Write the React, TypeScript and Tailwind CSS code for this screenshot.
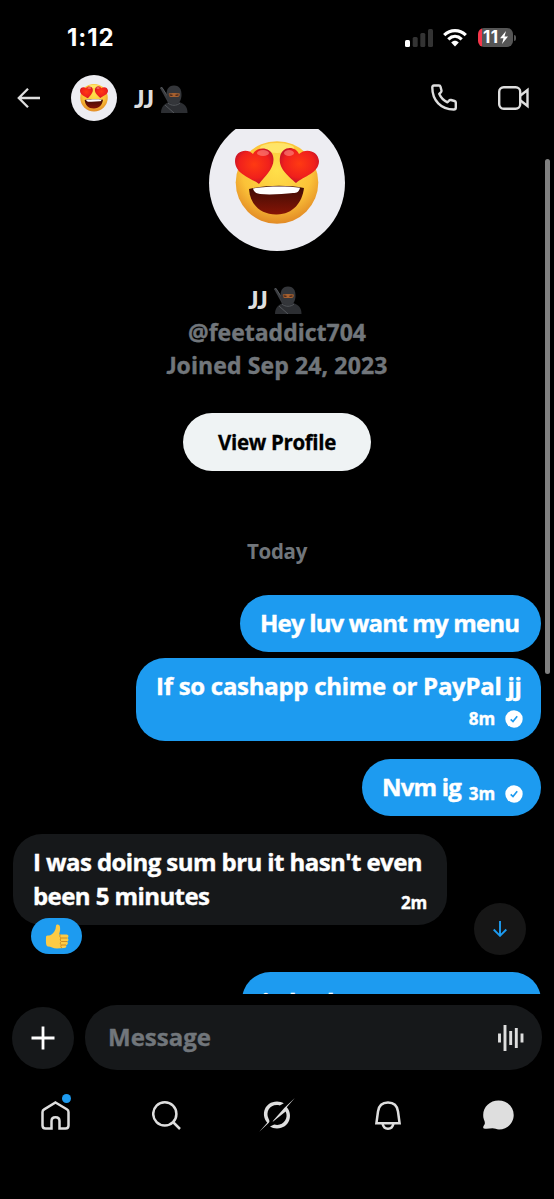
import React from 'react';
import { clsx } from 'clsx';

interface IconProps {
  className?: string;
}

const HeartEyes: React.FC<IconProps> = ({ className }) => (
  <svg viewBox="0 0 84 84" className={className}>
    <defs>
      <radialGradient id="face" cx="50%" cy="35%" r="65%">
        <stop offset="0%" stopColor="#ffe04a" />
        <stop offset="65%" stopColor="#fbc238" />
        <stop offset="100%" stopColor="#e28a25" />
      </radialGradient>
      <radialGradient id="heart" cx="50%" cy="45%" r="60%">
        <stop offset="0%" stopColor="#ff3a12" />
        <stop offset="65%" stopColor="#f0201c" />
        <stop offset="100%" stopColor="#b80f2c" />
      </radialGradient>
      <linearGradient id="mouth" x1="0" y1="0" x2="0" y2="1">
        <stop offset="0%" stopColor="#3c0c06" />
        <stop offset="100%" stopColor="#861405" />
      </linearGradient>
    </defs>
    <circle cx="42" cy="41.5" r="41.3" fill="url(#face)" />
    <ellipse cx="42" cy="7" rx="17" ry="5" fill="#fff07a" opacity="0.7" />
    <path d="M14 48C30 44 54 44 69 47C67 62 58 73 42 73.500C26 74 15 64 14 48Z" fill="url(#mouth)" />
    <path d="M18 47.500C32 45 53 45 65 46.800C64 51 62 52 58 52C48 53 35 54 25 53C21 52.500 19 51 18 47.500Z" fill="#fff" />
    <path
      d="M24 43C16 37 0 33 0 20C0 9 13 7 18 13C21 6 35 5 38 15C41 26 30 35 24 43Z"
      fill="url(#heart)"
    />
    <path
      d="M61 42C53 35 43 27 45 16C47 4 61 5 64 13C70 7 83 9 84 20C84 32 69 35 61 42Z"
      fill="url(#heart)"
    />
    <ellipse cx="28" cy="12" rx="6" ry="3" fill="#ff8e86" opacity="0.6" />
    <ellipse cx="54" cy="12" rx="5" ry="3" fill="#ff8e86" opacity="0.6" />
  </svg>
);

const Ninja: React.FC<IconProps> = ({ className }) => (
  <svg viewBox="0 0 28 28" className={className}>
    <path d="M0 3L2 2L14 21L11 23Z" fill="#3a3c40" />
    <path d="M0.500 3L2 2.500L8 12" fill="none" stroke="#55585c" strokeWidth="1" />
    <path d="M1 28C1 22 4 19 9 17L19 17C25 19 27.500 22 27.500 28Z" fill="#2c2e32" />
    <path d="M14 0.500C8 0.500 6.500 5 6.500 10C6.500 15 9 19.500 14 19.500C19 19.500 21.500 15 21.500 10C21.500 5 20 0.500 14 0.500Z" fill="#34363a" />
    <path d="M8.800 8.500C11 7.800 17 7.800 19.800 8.500C19.800 12 18.500 12.200 14 12C10 12.200 8.800 12 8.800 8.500Z" fill="#a5602f" />
    <path d="M9.500 9.800L12.500 10.300M15.500 10.300L18.500 9.800" stroke="#41231a" strokeWidth="1.300" />
    <path d="M5 20L14 28M8 18C11 21 17 21 20 18" fill="none" stroke="#54575b" strokeWidth="1" />
  </svg>
);

const ThumbsUp: React.FC<IconProps> = ({ className }) => (
  <svg viewBox="0 0 24 25" className={className}>
    <path
      d="M1 13C1 11.500 2 11.500 4 11.500C7 11 9.500 8 10.500 5L11 2C11.300 0 14.500 0 15 3C15.500 6 14.500 8.500 14 10.500L21.500 10.500C24 10.500 24 14 22 14C24 14.500 23.800 17.500 22 17.500C23.500 18.500 23 21 21 21C22 22.500 21 24 19 24L12 24.500C8 24.500 6 22.500 3 22.500C1 22.500 0.800 19 1 13Z"
      fill="#fdcb45"
    />
    <path
      d="M22 14L16.500 14C14.500 13.500 14.500 11.500 15.500 10.500M22 17.500L16.500 17.500C15 17 15 15 16 14M21 21L16.500 21C15 20.500 15 18.500 16.200 17.500M17 24C15.500 23.500 15.500 21.800 16.500 21"
      fill="none"
      stroke="#ca851f"
      strokeWidth="0.900"
    />
  </svg>
);

const VerifiedCheck = () => (
  <svg viewBox="0 0 18 18" className="size-[18px] shrink-0">
    <circle cx="9" cy="9" r="8.700" fill="#fff" />
    <path d="M5.700 9.300L8 11.500L12.200 6.300" fill="none" stroke="#1d9bf0" strokeWidth="1.700" />
  </svg>
);

const Name = () => (
  <div className="flex items-center gap-[7px]">
    <span className="font-['Lato'] text-[24.5px] leading-7 font-black tracking-[-0.8px] text-[#dedede]">JJ</span>
    <Ninja className="size-7" />
  </div>
);

const StatusBar = () => (
  <div className="flex h-[68px] items-center justify-between pt-[7px] pr-[38px] pl-[67px]">
    <span className="font-['Inter'] text-[24px] font-bold tracking-[0.9px] text-white">1:12</span>
    <div className="flex items-center">
      <svg viewBox="0 0 28 18" className="h-[18px] w-7">
        <rect x="0" y="11" width="5" height="7" rx="1.500" fill="#fff" />
        <rect x="7.700" y="8" width="5" height="10" rx="1.500" fill="#333" />
        <rect x="15.300" y="4" width="5" height="14" rx="1.500" fill="#333" />
        <rect x="23" y="0" width="5" height="18" rx="1.500" fill="#333" />
      </svg>
      <svg viewBox="0 0 24 18" className="ml-[10px] h-[18px] w-6" fill="none" stroke="#fff" strokeWidth="3.200">
        <path d="M1.200 6.200C7.500 0.100 16.500 0.100 22.800 6.200" />
        <path d="M5.300 10.300C9.300 6.500 14.700 6.500 18.700 10.300" />
        <path d="M8.200 13.500C10.500 11.300 13.500 11.300 15.800 13.500L12 17.500Z" fill="#fff" stroke="none" />
      </svg>
      <div className="ml-[11px] flex h-[19px] w-[35px] items-center overflow-hidden rounded-[6px] bg-[#555] bg-linear-to-r from-[#f5364a] from-[4px] to-[#555] to-[4px] pl-[5px]">
        <span className="font-['Inter'] text-[17px] leading-none font-bold tracking-[0.5px] text-white">11</span>
        <svg viewBox="0 0 8 13" className="ml-px h-[13px] w-2">
          <path d="M6 0L0 7.300L3.500 7.300L2 13L8 5.400L4.500 5.400Z" fill="#fff" />
        </svg>
      </div>
      <div className="ml-[1px] h-[6px] w-[2px] rounded-r-full bg-[#555]" />
    </div>
  </div>
);

const ChatHeader = () => (
  <header className="flex h-[61px] items-center pr-[25px] pb-[2px] pl-[17px]">
    <svg viewBox="0 0 23 20" className="h-5 w-[23px]" fill="none" stroke="#dedede" strokeWidth="2.300">
      <path d="M23 10L1.800 10M11 0.800L1.800 10L11 19.200" />
    </svg>
    <div className="ml-[31px] flex size-[46px] items-center justify-center rounded-full bg-[#ededf2]">
      <HeartEyes className="size-7" />
    </div>
    <div className="ml-[17px] pt-[2px]">
      <Name />
    </div>
    <svg viewBox="0 0 26 27" className="ml-auto h-[27px] w-[26px]" fill="none" stroke="#dedede" strokeWidth="2.400" strokeLinejoin="round">
      <path d="M3 1.500L8 1.500C9 1.500 9.300 2 9.500 2.800L10.500 6.500C10.700 7.500 10.300 8.100 9.500 8.700L8.200 9.800C9.800 13.600 12.500 16.500 16.500 18.300L18 16.700C18.500 16 19.200 15.800 20 16L23.500 17C24.400 17.300 24.800 17.700 24.800 18.600L24.800 23.500C24.800 24.800 24.200 25.500 22.800 25.500C10 25.500 1.300 16.500 1.300 3.500C1.300 2.200 1.800 1.500 3 1.500Z" />
    </svg>
    <svg viewBox="0 0 31 24" className="ml-[41px] h-6 w-[31px]" fill="none" stroke="#dedede" strokeWidth="2.400">
      <rect x="1.200" y="1.200" width="21" height="21.600" rx="4.500" />
      <path d="M22.500 9.500L29.500 4L29.500 20L22.500 14.500" />
    </svg>
  </header>
);

const Profile = () => (
  <section className="-mt-[14px] flex flex-col items-center">
    <div className="flex size-[136px] shrink-0 items-center justify-center rounded-full bg-[#ededf2]">
      <HeartEyes className="size-[84px]" />
    </div>
    <div className="mt-[32px] flex h-[33px] items-center pr-1">
      <Name />
    </div>
    <p className="text-[23px] leading-[33px] font-bold text-[#71767b] [-webkit-text-stroke:0.4px]">@feetaddict704</p>
    <p className="text-[23px] leading-[33px] font-bold tracking-[0.12px] text-[#71767b] [-webkit-text-stroke:0.4px]">
      <span className="font-['Lato'] font-black">J</span>oined Sep 24, 2023
    </p>
    <button className="mt-[31px] h-[58px] w-[188px] rounded-full bg-[#eff3f4] text-[20.5px] font-bold tracking-[-0.35px] text-black [-webkit-text-stroke:0.3px]">
      View Profile
    </button>
  </section>
);

interface BubbleProps {
  className: string;
  children: React.ReactNode;
}

const Bubble: React.FC<BubbleProps> = ({ className, children }) => (
  <div
    className={clsx(
      'rounded-[29px] px-5 pt-[11px] text-[24px] leading-[34px] font-bold whitespace-nowrap text-white [-webkit-text-stroke:0.4px]',
      className
    )}
  >
    {children}
  </div>
);

const Stamp: React.FC<{ time: string }> = ({ time }) => (
  <span className="flex items-center gap-[10px] text-[17px] leading-5 tracking-[-0.1px]">
    {time}
    <VerifiedCheck />
  </span>
);

const Messages = () => (
  <div className="flex flex-col items-end pr-[13px] pl-[13px]">
    <Bubble className="mt-[29px] h-[57px] w-[301px] bg-[#1d9bf0] tracking-[-0.82px]">Hey luv want my menu</Bubble>
    <Bubble className="mt-[6px] h-[83px] w-[405px] bg-[#1d9bf0] tracking-[-0.28px]">
      If so cashapp chime or PayPal jj
      <div className="mt-[6px] -mr-[2px] flex justify-end">
        <Stamp time="8m" />
      </div>
    </Bubble>
    <Bubble className="mt-[18px] flex h-[57px] w-[179px] justify-between bg-[#1d9bf0] tracking-[-0.8px]">
      <span>Nvm ig</span>
      <div className="-mr-[2px] pt-[14px]">
        <Stamp time="3m" />
      </div>
    </Bubble>
    <div className="relative mt-[18px] self-start">
      <Bubble className="flex h-[91px] w-[434px] bg-[#16181a] tracking-[-0.58px]">
        <p className="w-[368px] shrink-0">
          I was doing sum bru it hasn't even
          <br />
          been 5 minutes
        </p>
        <span className="pt-[41px] text-[17px] tracking-[-0.3px]">2m</span>
      </Bubble>
      <div className="absolute top-[84px] left-[18px] flex h-[36px] w-[51px] items-center justify-center rounded-full bg-[#1d9bf0]">
        <ThumbsUp className="h-[25px] w-6" />
      </div>
    </div>
    <Bubble className="mt-[47px] h-[57px] w-[299px] bg-[#1d9bf0] tracking-[-0.8px]">
      <div className="pt-[2px]">in both moments sure</div>
    </Bubble>
  </div>
);

const Composer = () => (
  <div className="mt-[11px] flex h-[65px] items-center gap-[11px] px-[12px]">
    <button className="flex size-[62px] items-center justify-center rounded-full bg-[#16181a]">
      <svg viewBox="0 0 24 24" className="size-6" stroke="#fff" strokeWidth="2.800">
        <path d="M12 0.500V23.500M0.500 12H23.500" />
      </svg>
    </button>
    <div className="flex h-full flex-1 items-center justify-between rounded-[32px] bg-[#16181a] pr-[18px] pl-[23px]">
      <span className="pb-px text-[24px] font-bold text-[#71767b] [-webkit-text-stroke:0.4px]">Message</span>
      <svg viewBox="0 0 26 26" className="size-[26px]" stroke="#dedede" strokeWidth="2.900">
        <path d="M1.500 8.500V17.500M7 0V26M12.700 6V20M18.300 3V23M24 8.500V17.500" />
      </svg>
    </div>
  </div>
);

const TabBar = () => (
  <nav className="grid h-[90px] grid-cols-5 justify-items-center text-[#dedede]">
    <div className="relative h-fit pt-[31px]">
      <svg viewBox="0 0 29 29" className="size-[29px]" fill="none" stroke="currentColor" strokeWidth="2.500">
        <path d="M14.500 1.500L25.800 8.300C27 9 27.500 9.800 27.500 11V24.500C27.500 26.500 26.500 27.500 24.500 27.500H18.500V20C18.500 17.500 17 16.200 14.500 16.200C12 16.200 10.500 17.500 10.500 20V27.500H4.500C2.500 27.500 1.500 26.500 1.500 24.500V11C1.500 9.800 2 9 3.200 8.300Z" />
      </svg>
      <span className="absolute top-[24px] left-[21px] size-[9px] rounded-full bg-[#1d9bf0]" />
    </div>
    <svg viewBox="0 0 29 29" className="mt-[31px] size-[29px]" fill="none" stroke="currentColor" strokeWidth="2.500">
      <circle cx="12.800" cy="12.900" r="11.600" />
      <path d="M21 21L28 28" />
    </svg>
    <svg viewBox="0 0 36 34" className="mt-[28px] h-[34px] w-9" fill="currentColor">
      <path d="M0.300 33.700L8.200 24.700C1.500 16.500 5.500 3.800 18 3.500C20.500 3.500 22.800 4.200 24.800 5.300L20.800 7.400C12 5 6 13 9.500 20.500C11 23 10.500 24.200 9.300 25.300Z" />
      <path d="M35.800 0L27.800 9.300C34.500 17 30.500 30.300 18 30.500C15.300 30.500 12.800 29.800 11 28.600L15.200 26.600C23.700 29 30 20.800 26.700 13.600L13.500 24L14.500 22.300L25.500 9.800Z" />
    </svg>
    <svg viewBox="0 0 26 29" className="mt-[31px] h-[29px] w-[26px]" fill="none" stroke="currentColor" strokeWidth="2.500">
      <path d="M1.400 22.300L3 10.500C3.800 4.500 7.800 1.500 13 1.500C18.200 1.500 22.200 4.500 23 10.500L24.600 22.300Z" />
      <path d="M7.500 22.500C8.200 26 10 27.700 13 27.700C16 27.700 17.800 26 18.500 22.500" />
    </svg>
    <svg viewBox="0 0 31 30" className="mt-[30px] h-[30px] w-[31px]" fill="currentColor">
      <path d="M15.500 0.500C24 0.500 30.700 6.800 30.700 15C30.700 23.300 24 29.500 16 29.500C13.500 29.500 11.800 28.300 9.500 28.300C6.500 28.600 3.500 29.200 0.800 28.500C-0.500 28 0.500 26 1.500 24.500C2.300 23 1.700 21.300 0.900 19.500C0.300 18 0.200 16.500 0.200 15C0.200 6.800 7 0.500 15.500 0.500Z" />
    </svg>
  </nav>
);

export default function App() {
  return (
    <main className="flex h-[1199px] w-[554px] flex-col overflow-hidden bg-black font-['Open_Sans',sans-serif]">
      <StatusBar />
      <ChatHeader />
      <div className="relative h-[865px] overflow-hidden">
        <Profile />
        <p className="mt-[65px] text-center text-[20.5px] leading-[30px] font-bold tracking-[-0.3px] text-[#71767b]">Today</p>
        <Messages />
        <div className="absolute top-[30px] right-[4px] h-[515px] w-[5px] rounded-full bg-[#808080]" />
        <button className="absolute top-[774px] right-[28px] flex size-[52px] items-center justify-center rounded-full bg-[#161616]">
          <svg viewBox="0 0 14 16" className="h-4 w-[14px]" fill="none" stroke="#1d9bf0" strokeWidth="1.900">
            <path d="M7 0V15M0.700 8.500L7 14.800L13.300 8.500" />
          </svg>
        </button>
      </div>
      <Composer />
      <TabBar />
    </main>
  );
}
